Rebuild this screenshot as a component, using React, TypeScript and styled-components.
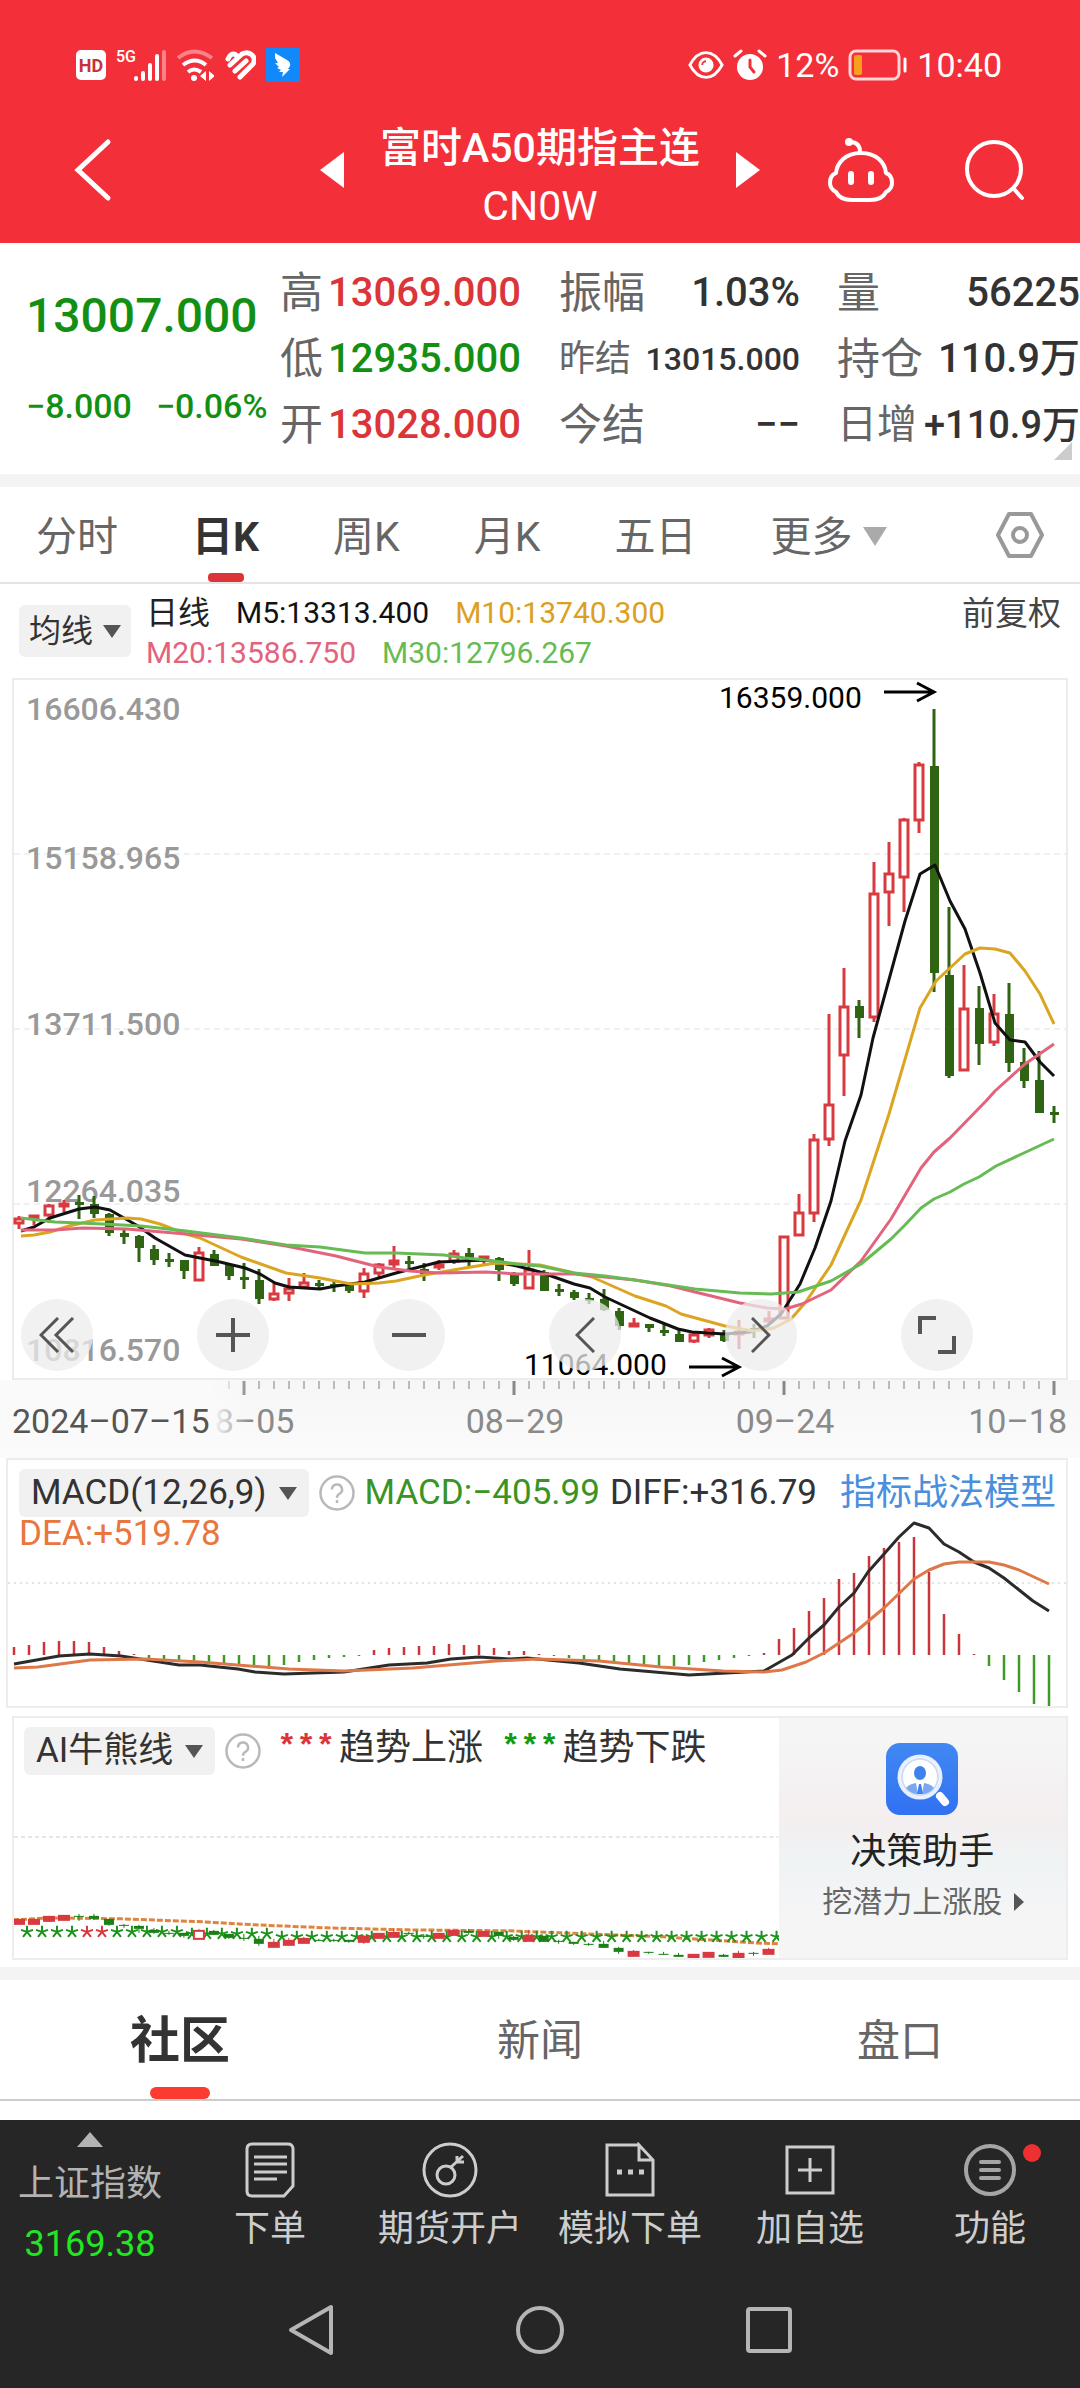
import React from "react";
import styled, { createGlobalStyle, css } from "styled-components";

const Global = createGlobalStyle`
  * { box-sizing: border-box; }
  body {
    margin: 0;
    background: #fff;
    color: #333;
    font-family: Roboto, "Noto Sans CJK SC", sans-serif;
  }
  button {
    margin: 0;
    padding: 0;
    border: 0;
    background: none;
    color: inherit;
    font: inherit;
    cursor: pointer;
  }
  a { color: inherit; text-decoration: none; }
  h1, h2, dl, dd, dt, p { margin: 0; font-weight: inherit; font-size: inherit; }
  svg { display: block; flex: none; }
`;

const RED = "#dc3539";
const GREEN = "#139013";

/* ---------- header ---------- */

const Header = styled.header`
  background: #f33039;
  color: #fff;
`;

const StatusBar = styled.div`
  display: flex;
  justify-content: space-between;
  align-items: center;
  height: 110px;
  padding: 20px 78px 0 76px;
`;

const StatusGroup = styled.div<{ $gap: number }>`
  display: flex;
  align-items: center;
  gap: ${(p) => p.$gap}px;
  font-size: 34px;
  line-height: 40px;
`;

const TitleBar = styled.div`
  display: grid;
  grid-template-columns: 1fr auto 1fr;
  align-items: center;
  height: 133px;
  padding: 0 54px;
`;

const TitleCenter = styled.div`
  display: flex;
  align-items: center;
  gap: 36px;
`;

const IconButton = styled.button`
  padding-bottom: 14px;
`;

const BackButton = styled(IconButton)`
  justify-self: start;
  padding-left: 20px;
`;

const Title = styled.h1`
  text-align: center;
  font-size: 41px;
  line-height: 58px;
  font-weight: 500;
`;

const TitleCode = styled.span`
  display: block;
  font-weight: 400;
`;

const HeaderActions = styled.div`
  display: flex;
  justify-content: flex-end;
  align-items: center;
  gap: 68px;
`;

/* ---------- quote ---------- */

const Quote = styled.section`
  display: grid;
  grid-template-columns: 280px 241px 38px 241px 37px 1fr;
  height: 231px;
  padding-top: 17px;
`;

const QuoteMain = styled.div`
  display: flex;
  flex-direction: column;
  padding-left: 26px;
  color: ${GREEN};
  font-weight: 500;
`;

const Price = styled.strong`
  padding-top: 24px;
  font-size: 48px;
  line-height: 64px;
  font-weight: 500;
`;

const Change = styled.div`
  display: flex;
  gap: 24px;
  padding-top: 36px;
  font-size: 34px;
  line-height: 44px;
`;

const QuoteList = styled.dl<{ $col: number }>`
  grid-column: ${(p) => p.$col};
`;

const QuoteItem = styled.div<{ $size?: "s" | "m" }>`
  display: flex;
  justify-content: space-between;
  align-items: center;
  height: 66px;
  white-space: nowrap;
  font-size: ${(p) => (p.$size === "s" ? 32 : p.$size === "m" ? 38 : 40)}px;
  line-height: 66px;
  dt {
    color: #666;
    font-size: ${(p) => (p.$size === "s" ? 36 : p.$size === "m" ? 40 : 43)}px;
  }
`;

const Value = styled.dd<{ $color?: string }>`
  color: ${(p) => p.$color || "#333"};
  font-weight: 500;
`;

const Corner = styled.svg`
  position: absolute;
  right: 8px;
  bottom: 14px;
`;

const QuoteWrap = styled.div`
  position: relative;
`;

const Band = styled.div`
  height: 13px;
  background: #f4f4f4;
`;

/* ---------- period tabs ---------- */

const Periods = styled.nav`
  display: flex;
  align-items: stretch;
  gap: 74px;
  height: 97px;
  padding: 0 36px;
  border-bottom: 2px solid #e4e4e4;
`;

const Period = styled.button<{ $active?: boolean }>`
  display: flex;
  align-items: center;
  gap: 10px;
  position: relative;
  padding-top: 4px;
  color: ${(p) => (p.$active ? "#333" : "#666")};
  font-size: 41px;
  line-height: 56px;
  font-weight: ${(p) => (p.$active ? 700 : 400)};
  ${(p) =>
    p.$active &&
    css`
      &::after {
        content: "";
        position: absolute;
        left: calc(50% - 18px);
        bottom: 0;
        width: 36px;
        height: 9px;
        border-radius: 4px;
        background: ${RED};
      }
    `}
`;

const SettingsButton = styled.button`
  margin-left: auto;
`;

/* ---------- indicator rows ---------- */

const Averages = styled.div`
  display: flex;
  align-items: center;
  height: 94px;
  padding: 0 19px;
  gap: 15px;
`;

const Picker = styled.button<{ $big?: boolean }>`
  display: flex;
  align-items: center;
  justify-content: space-between;
  gap: ${(p) => (p.$big ? 12 : 10)}px;
  height: ${(p) => (p.$big ? 48 : 52)}px;
  padding: 0 ${(p) => (p.$big ? 12 : 10)}px;
  border-radius: 6px;
  background: #f1f1f1;
  color: #333;
  font-size: ${(p) => (p.$big ? 35 : 32)}px;
  line-height: 48px;
`;

const Legend = styled.div`
  flex: 1;
  padding-top: 4px;
`;

const LegendRow = styled.div`
  display: flex;
  gap: 26px;
  font-size: 30px;
  line-height: 40px;
`;

const LegendItem = styled.span<{ $color?: string; $cjk?: boolean }>`
  color: ${(p) => p.$color || "#222"};
  font-size: ${(p) => (p.$cjk ? 32 : 30)}px;
`;

const Adjust = styled.button`
  align-self: flex-start;
  padding-top: 8px;
  color: #444;
  font-size: 33px;
  line-height: 44px;
`;

/* ---------- charts ---------- */

const ChartArea = styled.section`
  position: relative;
`;

const Plot = styled.svg`
  width: 100%;
  height: auto;
`;

const ChartTools = styled.div`
  position: absolute;
  left: 0;
  right: 0;
  bottom: 9px;
  display: flex;
  gap: 104px;
  padding-left: 21px;
`;

const ToolButton = styled.button`
  display: grid;
  place-items: center;
  width: 72px;
  height: 72px;
  border-radius: 50%;
  background: rgba(236, 236, 236, 0.75);
`;

const TimeAxis = styled.div`
  padding-bottom: 8px;
  background: linear-gradient(#f6f6f6, #fbfbfb);
`;

const Stack = styled.section<{ $inset?: boolean }>`
  display: grid;
  margin: ${(p) => (p.$inset ? "8px 12px 7px 12px" : "0 12px 0 6px")};
  grid-template-columns: ${(p) => (p.$inset ? "766fr 288fr" : "1fr")};
  border: 2px solid #ededed;
`;

const StackPlot = styled(Plot)`
  grid-area: 1 / 1;
`;

const StackHead = styled.div<{ $ai?: boolean }>`
  grid-area: 1 / 1;
  display: flex;
  flex-wrap: wrap;
  align-items: center;
  align-content: flex-start;
  column-gap: 10px;
  padding: ${(p) => (p.$ai ? "9px 0 0 10px" : "9px 10px 0 11px")};
  font-size: 35px;
  line-height: 48px;
`;

const Reading = styled.span<{ $color?: string }>`
  color: ${(p) => p.$color || "#333"};
  font-weight: 400;
`;

const SecondLine = styled(Reading)`
  flex-basis: 100%;
  line-height: 34px;
`;

const ModelLink = styled.a`
  margin-left: auto;
  color: #4a8fdd;
  font-size: 36px;
`;

const Trend = styled.span`
  display: flex;
  align-items: center;
  gap: 4px;
  padding: 0 2px 6px 6px;
  font-size: 36px;
  line-height: 42px;
`;

const Stars = styled.span<{ $color: string }>`
  color: ${(p) => p.$color};
  font: 700 32px/42px "Liberation Mono", monospace;
`;

const Promo = styled.a`
  display: flex;
  flex-direction: column;
  align-items: center;
  padding-top: 25px;
  background: linear-gradient(#f5f5f6 10%, #f4eeef 42%, #eff3f4 60%, #f5f5f6 85%);
  color: #222;
`;

const PromoTitle = styled.span`
  padding-top: 10px;
  font-size: 36px;
  line-height: 54px;
`;

const PromoSub = styled.span`
  display: flex;
  align-items: center;
  gap: 12px;
  padding-left: 2px;
  color: #666;
  font-size: 30px;
  line-height: 46px;
`;

/* ---------- community tabs ---------- */

const Sections = styled.nav`
  display: grid;
  grid-template-columns: repeat(3, 1fr);
  height: 121px;
  margin-bottom: 19px;
  border-bottom: 2px solid #ccc;
`;

const SectionTab = styled.button<{ $active?: boolean }>`
  position: relative;
  padding-top: 4px;
  color: ${(p) => (p.$active ? "#333" : "#666")};
  font-size: ${(p) => (p.$active ? 50 : 43)}px;
  line-height: 64px;
  font-weight: ${(p) => (p.$active ? 700 : 400)};
  ${(p) =>
    p.$active &&
    css`
      &::after {
        content: "";
        position: absolute;
        left: calc(50% - 30px);
        bottom: 0;
        width: 60px;
        height: 12px;
        border-radius: 6px;
        background: #fb3b30;
      }
    `}
`;

/* ---------- bottom ---------- */

const Footer = styled.footer`
  background: #262626;
  color: #cdcdcd;
`;

const ActionBar = styled.nav`
  display: grid;
  grid-template-columns: repeat(6, 1fr);
  height: 152px;
`;

const Action = styled.button`
  display: flex;
  flex-direction: column;
  align-items: center;
  gap: 8px;
  position: relative;
  padding-top: 22px;
  font-size: 36px;
  line-height: 46px;
  white-space: nowrap;
`;

const IndexAction = styled(Action)`
  gap: 14px;
  padding-top: 12px;
  color: #b3b3b3;
`;

const IndexValue = styled.span`
  color: #22e622;
`;

const Dot = styled.i`
  position: absolute;
  left: calc(50% + 33px);
  top: 24px;
  width: 18px;
  height: 18px;
  border-radius: 50%;
  background: #ee3030;
`;

const SystemBar = styled.div`
  display: flex;
  justify-content: center;
  align-items: center;
  gap: 180px;
  height: 117px;
`;

/* ---------- data ---------- */

type Candle = [rising: number, high: number, top: number, bottom: number, low: number];

const candles: Candle[] = [
  [1, 538, 540, 546, 551], [1, 537, 537, 540, 547], [1, 526, 527, 538, 545], [1, 522, 525, 529, 534],
  [0, 517, 524, 526, 541], [0, 518, 526, 536, 540], [0, 535, 536, 555, 558], [0, 552, 555, 559, 566],
  [0, 557, 558, 570, 584], [0, 567, 571, 582, 587], [0, 575, 581, 583, 589], [0, 582, 582, 593, 601],
  [1, 569, 574, 603, 603], [0, 572, 576, 588, 588], [0, 586, 586, 598, 602], [0, 585, 599, 602, 611],
  [0, 591, 602, 621, 626], [1, 604, 615, 622, 623], [1, 600, 610, 616, 623], [1, 595, 604, 610, 611],
  [0, 602, 605, 606, 610], [0, 603, 606, 608, 614], [0, 606, 606, 613, 615], [1, 590, 595, 614, 620],
  [1, 585, 586, 596, 599], [1, 568, 582, 587, 590], [0, 578, 583, 586, 590], [0, 585, 591, 596, 603],
  [1, 582, 586, 590, 592], [1, 572, 575, 584, 586], [0, 570, 575, 582, 588], [1, 578, 578, 582, 586],
  [0, 579, 580, 592, 603], [0, 594, 596, 606, 608], [1, 572, 591, 611, 611], [0, 592, 594, 613, 613],
  [0, 606, 611, 612, 618], [0, 612, 614, 620, 622], [0, 615, 620, 622, 626], [0, 611, 621, 632, 633],
  [0, 630, 633, 648, 652], [1, 640, 645, 649, 649], [0, 646, 646, 650, 654], [0, 646, 652, 654, 658],
  [0, 650, 656, 664, 664], [1, 655, 656, 664, 665], [1, 650, 651, 658, 660], [0, 652, 656, 663, 664],
  [1, 642, 653, 656, 671], [0, 646, 650, 653, 660], [1, 633, 640, 642, 643], [1, 558, 558, 641, 641],
  [1, 516, 534, 558, 558], [1, 456, 461, 536, 544], [1, 336, 426, 462, 468], [1, 290, 328, 378, 418],
  [0, 322, 328, 340, 360], [1, 184, 215, 340, 344], [1, 164, 195, 215, 248], [1, 140, 141, 200, 234],
  [1, 84, 86, 143, 155], [0, 31, 88, 295, 314], [0, 229, 297, 398, 400], [1, 287, 330, 393, 393],
  [0, 308, 330, 366, 387], [1, 316, 335, 365, 368], [0, 305, 336, 385, 394], [0, 370, 384, 403, 410],
  [0, 373, 402, 435, 435], [0, 428, 434, 436, 445],
];

const averages = [
  {
    color: "#111",
    points:
      "21,553 34,549 50,540 79,531 95,529 110,532 138,548 155,560 185,577 220,584 245,590 260,596 275,605 289,609 320,611 336,608 365,604 396,595 439,584 486,582 517,588 540,594 554,599 574,606 590,610 605,619 635,633 650,640 678,651 692,654 725,656 750,654 767,648 781,636 800,606 815,570 831,523 845,463 861,417 873,360 905,243 920,196 935,187 950,223 965,251 980,295 995,345 1010,362 1025,364 1040,384 1054,398",
  },
  {
    color: "#dba522",
    points:
      "21,558 34,557 50,554 69,548 95,542 127,540 141,541 160,546 186,556 200,560 241,579 286,595 320,600 351,606 379,605 396,603 424,597 465,590 496,585 540,587 592,599 635,618 666,628 681,636 725,648 753,653 774,650 791,641 805,625 831,587 861,522 877,473 889,436 920,330 936,303 965,276 980,270 995,271 1010,275 1025,293 1040,316 1054,346",
  },
  {
    color: "#e3637d",
    points:
      "21,552 55,552 83,550 127,551 186,556 241,561 286,568 336,578 379,589 410,593 439,595 486,594 517,596 574,596 635,602 671,608 695,614 740,625 767,630 785,631 802,626 831,612 861,583 891,541 921,490 934,474 950,460 986,423 995,413 1025,386 1054,366",
  },
  {
    color: "#67bb54",
    points:
      "21,540 55,544 103,546 141,548 186,553 241,560 286,567 320,569 365,575 396,575 444,577 465,580 486,582 517,586 540,588 574,595 605,598 635,602 695,611 740,615 771,616 798,614 831,603 861,586 891,561 905,547 921,530 934,521 950,514 964,506 979,499 996,488 1026,474 1054,461",
  },
];

const macdBars = [
  8, 10, 13, 14, 14, 13, 8, 4, 1, -3, -4, -6, -8, -8, -9, -10, -10, -11, -10, -7, -5, -3, -2, -1, 5, 7, 8, 9, 9, 11,
  10, 10, 7, 4, 4, 1, -1, -3, -4, -5, -8, -9, -10, -11, -11, -10, -7, -5, -3, -1, 2, 16, 27, 44, 57, 76, 82, 99, 107,
  113, 118, 83, 41, 21, 1, -11, -25, -37, -49, -52,
];

const diffLine =
  "14,206 59,198 90,196 121,198 179,207 200,207 238,211 255,214 284,216 344,214 389,207 427,205 451,201 479,199 510,201 527,200 579,205 620,211 689,217 764,213 792,197 809,180 824,167 839,149 854,135 868,114 884,96 899,79 914,65 929,70 944,86 959,94 974,104 989,110 1004,120 1033,143 1049,153";
const deaLine =
  "14,210 38,209 90,202 145,201 200,204 289,211 344,213 413,210 496,203 537,201 599,203 661,209 723,213 764,214 782,212 806,204 824,195 854,175 884,150 914,121 929,112 944,106 959,104 989,104 1004,107 1019,112 1049,126";

const scaleLabels = [
  { text: "16606.430", y: 42 },
  { text: "15158.965", y: 191 },
  { text: "13711.500", y: 357 },
  { text: "12264.035", y: 524 },
  { text: "10816.570", y: 683 },
];

const candleX = (i: number) => 19 + i * 15;

/* ---------- drawings ---------- */

const Down = ({ w = 18, h = 13, color = "#555" }) => (
  <svg width={w} height={h} viewBox="0 0 18 13" preserveAspectRatio="none">
    <path d="M0 0H18L9 13Z" fill={color} />
  </svg>
);

const Help = () => (
  <svg width="36" height="36" viewBox="0 0 36 36" fill="none" stroke="#b9b9b9" strokeWidth="2.5">
    <circle cx="18" cy="18" r="16.5" />
    <path d="M13 14.5a5 5 0 1 1 7.5 4.3c-1.8 1.1-2.5 1.8-2.5 4M18 25v3" />
  </svg>
);

const Arrow = ({ x, y }: { x: number; y: number }) => (
  <path d={`M${x} ${y}h50m-17 -9l17 9l-17 9`} fill="none" stroke="#000" strokeWidth="3" />
);

const PriceChart = () => (
  <Plot viewBox="0 0 1080 702" role="img" aria-label="日K">
    <rect x="13" y="1" width="1054" height="700" fill="none" stroke="#ececec" strokeWidth="2" />
    {[176, 351, 526].map((y) => (
      <path key={y} d={`M14 ${y}H1066`} stroke="#e2e2e2" strokeWidth="1" strokeDasharray="6 4" />
    ))}
    {scaleLabels.map((l) => (
      <text key={l.text} x="26" y={l.y} fill="#999" fontSize="32" fontWeight="500">
        {l.text}
      </text>
    ))}
    {candles.map(([up, high, top, bottom, low], i) => {
      const x = candleX(i);
      const color = up ? "#d83a40" : "#2f6412";
      const h = Math.max(bottom - top, 3);
      return (
        <g key={i}>
          <path d={`M${x} ${high}V${top}M${x} ${bottom}V${low}`} stroke={color} strokeWidth="3" />
          {up ? (
            <rect x={x - 4} y={top + 1} width="8" height={Math.max(h - 2, 2)} fill="#fff" stroke={color} strokeWidth="3" />
          ) : (
            <rect x={x - 4} y={top} width="9" height={h} fill={color} />
          )}
        </g>
      );
    })}
    {averages.map((a) => (
      <polyline key={a.color} points={a.points} fill="none" stroke={a.color} strokeWidth="3" strokeLinejoin="round" />
    ))}
    <text x="719" y="30" fontSize="30">16359.000</text>
    <Arrow x={884} y={14} />
    <text x="524" y="697" fontSize="30">11064.000</text>
    <Arrow x={689} y={689} />
  </Plot>
);

const Axis = () => (
  <Plot viewBox="0 0 1080 70" role="img" aria-label="2024–07–15 10–18">
    <defs>
      <linearGradient id="fade">
        <stop offset="0.85" stopColor="#fafafa" />
        <stop offset="1" stopColor="#fafafa" stopOpacity="0" />
      </linearGradient>
    </defs>
    {candles.map((_, i) => {
      const major = i === 15 || i === 33 || i === 51 || i === 69;
      return (
        <path
          key={i}
          d={`M${candleX(i)} 1V${major ? 15 : 9}`}
          stroke={major ? "#888" : "#bbb"}
          strokeWidth={major ? 3 : 2}
        />
      );
    })}
    <g fill="#8a8a8a" fontSize="34" textAnchor="middle">
      <text x="245" y="53">08–05</text>
      <text x="515" y="53">08–29</text>
      <text x="785" y="53">09–24</text>
      <text x="1067" y="53" textAnchor="end">10–18</text>
    </g>
    <rect x="0" y="0" width="250" height="70" fill="url(#fade)" />
    <text x="12" y="53" fontSize="34" fill="#555">2024–07–15</text>
  </Plot>
);

const MacdChart = () => (
  <StackPlot viewBox="8 2 1058 246" role="img" aria-label="MACD">
    <path d="M8 125H1066" stroke="#e4e4e4" strokeWidth="2" strokeDasharray="2 4" />
    {macdBars.map((v, i) => (
      <path key={i} d={`M${14 + i * 15} 197v${-v}`} stroke={v > 0 ? "#c9353a" : "#3d9a26"} strokeWidth="2.5" />
    ))}
    <polyline points={diffLine} fill="none" stroke="#2b2b2b" strokeWidth="3" strokeLinejoin="round" />
    <polyline points={deaLine} fill="none" stroke="#de7848" strokeWidth="3" strokeLinejoin="round" />
  </StackPlot>
);

const trendY = (y: number) => Math.round(201 + (y - 525) * 0.296);
const starY = (i: number) => (i < 11 ? 217 : i < 17 ? 219 : 222);

const TrendChart = () => (
  <StackPlot viewBox="14 3 765 240" role="img" aria-label="AI牛熊线">
    <path d="M14 122H779" stroke="#e6e6e6" strokeWidth="2" strokeDasharray="4 3" />
    <polyline
      points="13,205 51,203 122,204 204,207 255,210 327,213 408,215 510,216 561,218 663,222 755,228 779,229"
      fill="none"
      stroke="#dd8440"
      strokeWidth="3"
      strokeDasharray="6 2"
    />
    {Array.from({ length: 51 }, (_, i) => (
      <path
        key={i}
        transform={`translate(${27 + i * 15} ${starY(i)})`}
        d="M0 0V-6M0 0L6 -2M0 0L4 5M0 0L-4 5M0 0L-6 -2"
        stroke={i === 4 || i === 5 ? RED : "#1b931b"}
        strokeWidth="2"
      />
    ))}
    {candles.slice(0, 51).map(([up, high, top, bottom, low], i) => {
      const x = candleX(i);
      const color = up ? "#d83a40" : "#1a7f14";
      const y = trendY(top);
      const h = trendY(bottom) - y;
      const open = up && h > 5;
      return (
        <g key={i}>
          <path d={`M${x} ${trendY(high)}V${trendY(low)}`} stroke={color} strokeWidth="1" />
          <rect
            x={x - 5}
            y={y}
            width="10"
            height={up ? Math.max(h, 4) : Math.max(h, 1)}
            fill={open ? "#fff" : color}
            stroke={up ? color : "none"}
            strokeWidth="2"
          />
        </g>
      );
    })}
  </StackPlot>
);

const AssistantIcon = () => (
  <svg width="72" height="72" viewBox="0 0 72 72">
    <defs>
      <linearGradient id="tile" x2="0" y2="1">
        <stop stopColor="#4188f2" />
        <stop offset="1" stopColor="#3171f3" />
      </linearGradient>
    </defs>
    <rect width="72" height="72" rx="14" fill="url(#tile)" />
    <path d="M54 53l5 6" stroke="#fff" strokeWidth="8" strokeLinecap="round" />
    <circle cx="34" cy="34" r="21" fill="#fff" stroke="#e8f0ff" strokeWidth="3" />
    <circle cx="34" cy="34" r="18" fill="none" stroke="#cddcf8" strokeWidth="2" />
    <ellipse cx="34" cy="30" rx="6" ry="7" fill="#3f82ee" />
    <path d="M20 45q3-4 10-5l2 11q-7 0-12-6ZM48 45q-3-4-10-5l-2 11q7 0 12-6Z" fill="#7ca8ef" />
    <path d="M33 41h2l2 10h-6Z" fill="#3f82ee" />
  </svg>
);

const ActionIcon = ({ children, color = "#cdcdcd" }: { children: React.ReactNode; color?: string }) => (
  <svg width="56" height="56" viewBox="0 0 56 56" fill="none" stroke={color} strokeWidth="3">
    {children}
  </svg>
);

const HdIcon = () => (
  <svg width="30" height="30" viewBox="0 0 30 30">
    <rect width="30" height="30" rx="5" fill="#fff" />
    <text x="15" y="22" textAnchor="middle" fontSize="18" fontWeight="700" fill="#c9303c">HD</text>
  </svg>
);

const SignalIcon = () => (
  <svg width="50" height="34" viewBox="0 0 50 34" fill="none" stroke="#fff" strokeWidth="4" strokeLinecap="round">
    <text x="0" y="14" fontSize="16" fill="#fff" stroke="none" fontWeight="500">5G</text>
    <path d="M20 30v1M27 25v6M34 17v14M41 8v23" />
    <path d="M48 4v27" strokeOpacity="0.4" />
  </svg>
);

const WifiIcon = () => (
  <svg width="38" height="34" viewBox="0 0 38 34" fill="none" stroke="#fff" strokeWidth="4">
    <path d="M2 10q16-13 34 0" strokeOpacity="0.4" />
    <path d="M7 17q12-9 23 0M12 24q6-5 13 0" />
    <circle cx="18" cy="30" r="3" fill="#fff" stroke="none" />
    <path d="M30 23v10l-6-5zM33 33v-10l6 5z" fill="#fff" stroke="none" />
  </svg>
);

const HealthIcon = () => (
  <svg width="32" height="30" viewBox="0 0 32 30" fill="none" stroke="#fff" strokeWidth="5" strokeLinecap="round">
    <path d="M4 9Q7 2 12 5M6 15L18 4q6-3 10 1t1 9L16 27M11 21L22 11" />
  </svg>
);

const BirdIcon = () => (
  <svg width="34" height="34" viewBox="0 0 34 34">
    <rect width="34" height="34" fill="#1189fa" />
    <path d="M9 5l12 7q4 2 3 6l-2 3h2l-8 8 1-5h-4l2-2-4-2 2-1-4-4 3 0-3-5Z" fill="#fff" />
  </svg>
);

const EyeIcon = () => (
  <svg width="36" height="30" viewBox="0 0 38 30" fill="none" stroke="#fff" strokeWidth="3">
    <path d="M2 15Q9 2 19 2t17 13Q29 28 19 28T2 15Z" />
    <circle cx="19" cy="15" r="8" fill="#fff" stroke="none" />
    <path d="M15 15a4 4 0 0 1 4-4" stroke="#f33039" strokeWidth="2" />
  </svg>
);

const AlarmIcon = () => (
  <svg width="34" height="32" viewBox="0 0 34 32" fill="none" stroke="#fff" strokeWidth="3" strokeLinecap="round">
    <circle cx="17" cy="18" r="13" fill="#fff" stroke="none" />
    <path d="M2 7l6-5M32 7l-6-5" />
    <path d="M17 11v7l4 5" stroke="#f33039" />
  </svg>
);

const BatteryIcon = () => (
  <svg width="60" height="32" viewBox="0 0 60 32" fill="none" stroke="#fff" strokeWidth="3">
    <rect x="2" y="2" width="49" height="28" rx="6" strokeOpacity="0.8" />
    <rect x="6" y="6" width="8" height="20" rx="2" fill="#f8a01d" stroke="none" />
    <path d="M57 10v12" strokeLinecap="round" />
  </svg>
);

/* ---------- page ---------- */

export default function App() {
  return (
    <>
      <Global />
      <Header>
        <StatusBar>
          <StatusGroup $gap={10}>
            <HdIcon />
            <SignalIcon />
            <WifiIcon />
            <HealthIcon />
            <BirdIcon />
          </StatusGroup>
          <StatusGroup $gap={9}>
            <EyeIcon />
            <AlarmIcon />
            <span>12%</span>
            <BatteryIcon />
            <span>10:40</span>
          </StatusGroup>
        </StatusBar>
        <TitleBar>
          <BackButton aria-label="返回">
            <svg width="38" height="64" viewBox="0 0 38 64" fill="none" stroke="#fff" strokeWidth="5" strokeLinecap="round">
              <path d="M34 4L4 32L34 60" />
            </svg>
          </BackButton>
          <TitleCenter>
            <IconButton aria-label="上一个">
              <svg width="24" height="36" viewBox="0 0 24 36"><path d="M24 0V36L0 18Z" fill="#fff" /></svg>
            </IconButton>
            <Title>
              富时A50期指主连
              <TitleCode>CN0W</TitleCode>
            </Title>
            <IconButton aria-label="下一个">
              <svg width="24" height="36" viewBox="0 0 24 36"><path d="M0 0V36L24 18Z" fill="#fff" /></svg>
            </IconButton>
          </TitleCenter>
          <HeaderActions>
            <IconButton aria-label="助手">
              <svg width="70" height="66" viewBox="0 0 70 66" fill="none" stroke="#fff" strokeWidth="4" strokeLinecap="round" strokeLinejoin="round">
                <circle cx="23" cy="5" r="4" fill="#fff" stroke="none" />
                <path d="M24 5q10 0 10 10" />
                <path d="M35 16C51 16 59 26 60 36q6 2 6 10q0 6-6 9Q56 63 44 63H26Q14 63 10 55q-6-3-6-9q0-8 6-10C11 26 19 16 35 16Z" />
                <path d="M25 37v8M45 37v8" strokeWidth="6" />
              </svg>
            </IconButton>
            <IconButton aria-label="搜索">
              <svg width="62" height="62" viewBox="0 0 62 62" fill="none" stroke="#fff" strokeWidth="4" strokeLinecap="round">
                <circle cx="30" cy="30" r="27" />
                <path d="M50 50l8 9" />
              </svg>
            </IconButton>
          </HeaderActions>
        </TitleBar>
      </Header>

      <QuoteWrap>
        <Quote>
          <QuoteMain>
            <Price>13007.000</Price>
            <Change>
              <span>−8.000</span>
              <span>−0.06%</span>
            </Change>
          </QuoteMain>
          <QuoteList $col={2}>
            <QuoteItem><dt>高</dt><Value $color={RED}>13069.000</Value></QuoteItem>
            <QuoteItem><dt>低</dt><Value $color={GREEN}>12935.000</Value></QuoteItem>
            <QuoteItem><dt>开</dt><Value $color={RED}>13028.000</Value></QuoteItem>
          </QuoteList>
          <QuoteList $col={4}>
            <QuoteItem><dt>振幅</dt><Value>1.03%</Value></QuoteItem>
            <QuoteItem $size="s"><dt>昨结</dt><Value>13015.000</Value></QuoteItem>
            <QuoteItem><dt>今结</dt><Value>−−</Value></QuoteItem>
          </QuoteList>
          <QuoteList $col={6}>
            <QuoteItem><dt>量</dt><Value>56225</Value></QuoteItem>
            <QuoteItem><dt>持仓</dt><Value>110.9万</Value></QuoteItem>
            <QuoteItem $size="m"><dt>日增</dt><Value>+110.9万</Value></QuoteItem>
          </QuoteList>
        </Quote>
        <Corner width="18" height="18" viewBox="0 0 18 18"><path d="M18 0V18H0Z" fill="#ccc" /></Corner>
      </QuoteWrap>
      <Band />

      <Periods>
        <Period>分时</Period>
        <Period $active>日K</Period>
        <Period>周K</Period>
        <Period>月K</Period>
        <Period>五日</Period>
        <Period>更多<Down w={24} h={19} color="#aaa" /></Period>
        <SettingsButton aria-label="设置">
          <svg width="48" height="46" viewBox="0 0 48 46" fill="none" stroke="#999" strokeWidth="4" strokeLinejoin="round">
            <path d="M13 2H35L46 23L35 44H13L2 23Z" />
            <circle cx="24" cy="23" r="7" />
          </svg>
        </SettingsButton>
      </Periods>

      <Averages>
        <Picker>均线<Down /></Picker>
        <Legend>
          <LegendRow>
            <LegendItem $cjk>日线</LegendItem>
            <LegendItem $color="#111">M5:13313.400</LegendItem>
            <LegendItem $color="#dba022">M10:13740.300</LegendItem>
          </LegendRow>
          <LegendRow>
            <LegendItem $color="#e3637d">M20:13586.750</LegendItem>
            <LegendItem $color="#67bb54">M30:12796.267</LegendItem>
          </LegendRow>
        </Legend>
        <Adjust>前复权</Adjust>
      </Averages>

      <ChartArea>
        <PriceChart />
        <ChartTools>
          <ToolButton aria-label="最早">
            <svg width="36" height="36" viewBox="0 0 36 36" fill="none" stroke="#555" strokeWidth="3"><path d="M19 1L2 18L19 35M34 1L17 18L34 35" /></svg>
          </ToolButton>
          <ToolButton aria-label="放大">
            <svg width="34" height="34" viewBox="0 0 34 34" fill="none" stroke="#555" strokeWidth="4"><path d="M17 0V34M0 17H34" /></svg>
          </ToolButton>
          <ToolButton aria-label="缩小">
            <svg width="34" height="34" viewBox="0 0 34 34" fill="none" stroke="#555" strokeWidth="4"><path d="M0 17H34" /></svg>
          </ToolButton>
          <ToolButton aria-label="向左">
            <svg width="20" height="36" viewBox="0 0 20 36" fill="none" stroke="#555" strokeWidth="3"><path d="M19 1L2 18L19 35" /></svg>
          </ToolButton>
          <ToolButton aria-label="向右">
            <svg width="20" height="36" viewBox="0 0 20 36" fill="none" stroke="#555" strokeWidth="3"><path d="M1 1L18 18L1 35" /></svg>
          </ToolButton>
          <ToolButton aria-label="全屏">
            <svg width="38" height="38" viewBox="0 0 38 38" fill="none" stroke="#555" strokeWidth="4"><path d="M2 18V2H18M36 20V36H20" /></svg>
          </ToolButton>
        </ChartTools>
      </ChartArea>
      <TimeAxis><Axis /></TimeAxis>

      <Stack>
        <MacdChart />
        <StackHead>
          <Picker $big>MACD(12,26,9)<Down /></Picker>
          <Help />
          <Reading $color="#3a9425">MACD:−405.99</Reading>
          <Reading>DIFF:+316.79</Reading>
          <ModelLink href="#model">指标战法模型</ModelLink>
          <SecondLine $color="#e8763e">DEA:+519.78</SecondLine>
        </StackHead>
      </Stack>

      <Stack $inset>
        <TrendChart />
        <StackHead $ai>
          <Picker $big>AI牛熊线<Down /></Picker>
          <Help />
          <Trend><Stars $color={RED}>***</Stars>趋势上涨</Trend>
          <Trend><Stars $color="#139a13">***</Stars>趋势下跌</Trend>
        </StackHead>
        <Promo href="#assistant">
          <AssistantIcon />
          <PromoTitle>决策助手</PromoTitle>
          <PromoSub>
            挖潜力上涨股
            <svg width="10" height="18" viewBox="0 0 10 18"><path d="M0 0L10 9L0 18Z" fill="#555" /></svg>
          </PromoSub>
        </Promo>
      </Stack>
      <Band />

      <Sections>
        <SectionTab $active>社区</SectionTab>
        <SectionTab>新闻</SectionTab>
        <SectionTab>盘口</SectionTab>
      </Sections>

      <Footer>
        <ActionBar>
          <IndexAction>
            <svg width="26" height="15" viewBox="0 0 26 15"><path d="M13 0L26 15H0Z" fill="#b3b3b3" /></svg>
            <span>上证指数</span>
            <IndexValue>3169.38</IndexValue>
          </IndexAction>
          <Action>
            <ActionIcon>
              <path d="M10 2H46Q50 2 51 6V44L42 54H10Q5 54 5 49V7Q5 2 10 2Z" />
              <path d="M12 15H45M12 22H45M12 30H45M12 37H35" />
            </ActionIcon>
            下单
          </Action>
          <Action>
            <ActionIcon>
              <circle cx="28" cy="28" r="26" />
              <circle cx="24" cy="33" r="9" />
              <path d="M29 25L41 14M35 14V20H42" />
            </ActionIcon>
            期货开户
          </Action>
          <Action>
            <ActionIcon>
              <path d="M37 3H5V53H51V18L37 3V18H51" />
              <path d="M15 30h5M26 30h5M37 30h5" strokeWidth="5" />
            </ActionIcon>
            模拟下单
          </Action>
          <Action>
            <ActionIcon>
              <path d="M5 5H51V51H5ZM28 16V40M16 28H40" />
            </ActionIcon>
            加自选
          </Action>
          <Action>
            <ActionIcon color="#a5a5a5">
              <circle cx="28" cy="28" r="24" strokeWidth="4" />
              <path d="M19 20H37M19 28H37M19 36H37" strokeWidth="4" strokeLinecap="round" />
            </ActionIcon>
            功能
            <Dot />
          </Action>
        </ActionBar>
        <SystemBar>
          <button aria-label="返回">
            <svg width="48" height="52" viewBox="0 0 48 52" fill="none" stroke="#b5b5b5" strokeWidth="4" strokeLinejoin="round"><path d="M44 3V49L4 26Z" /></svg>
          </button>
          <button aria-label="主页">
            <svg width="50" height="50" viewBox="0 0 50 50" fill="none" stroke="#b5b5b5" strokeWidth="4"><circle cx="25" cy="25" r="22" /></svg>
          </button>
          <button aria-label="最近">
            <svg width="48" height="48" viewBox="0 0 48 48" fill="none" stroke="#b5b5b5" strokeWidth="4"><rect x="3" y="3" width="42" height="42" rx="2" /></svg>
          </button>
        </SystemBar>
      </Footer>
    </>
  );
}
